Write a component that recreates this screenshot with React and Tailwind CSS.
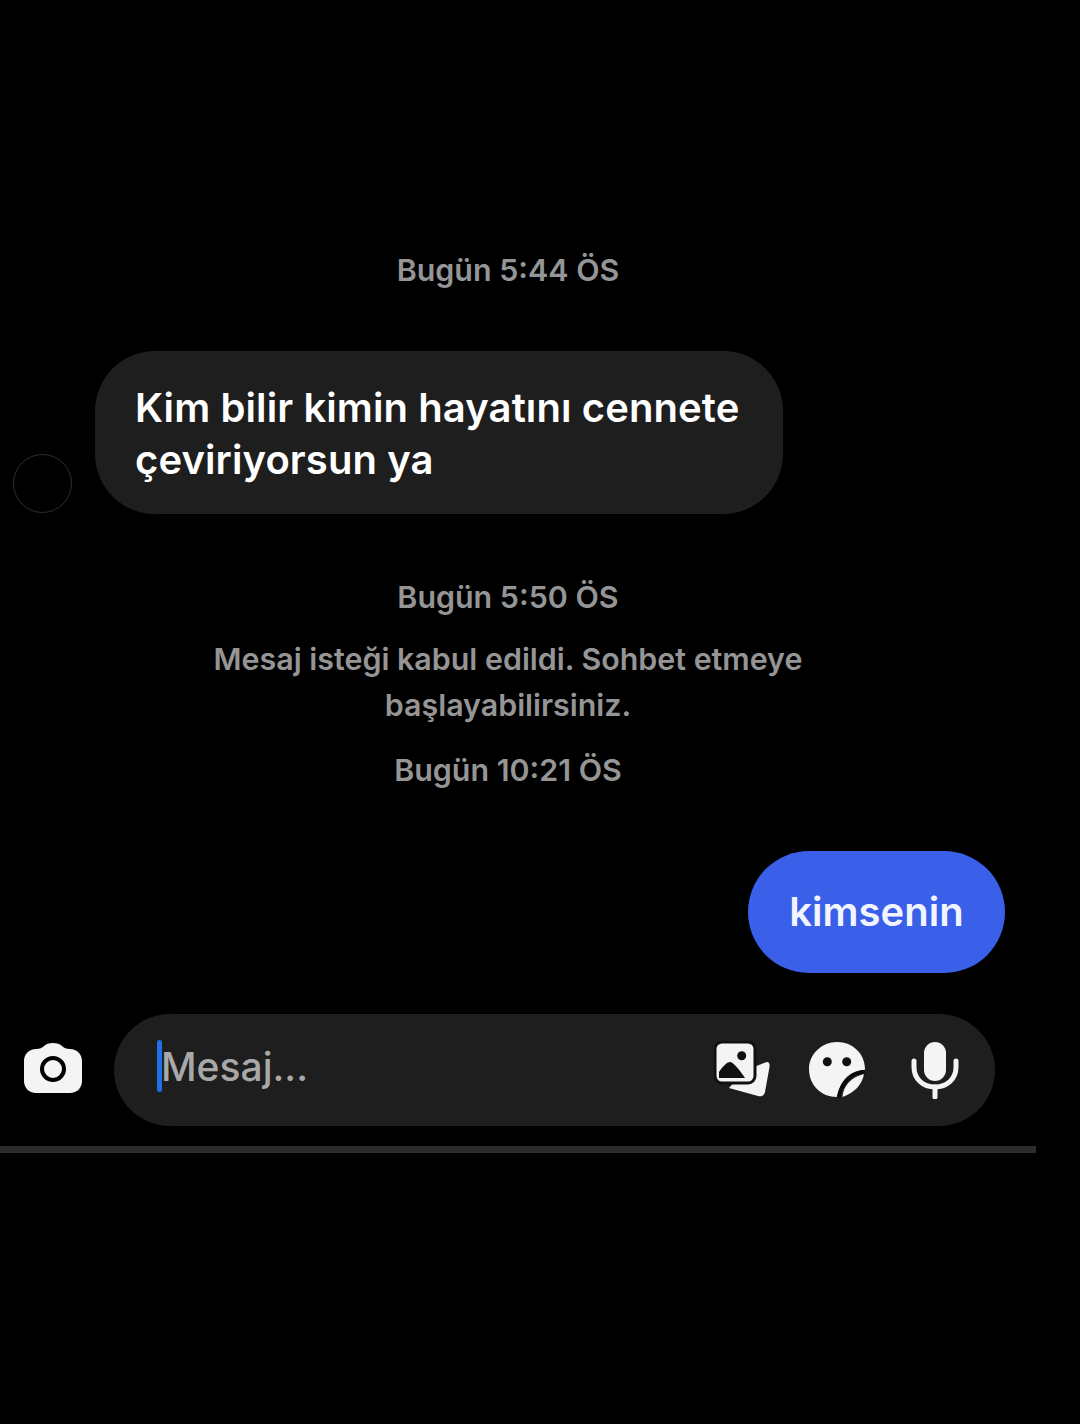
import React from "react";

const CameraIcon = () => (
  <svg width="60" height="54" viewBox="0 0 60 54">
    <path
      d="M13 6C17 6 19 5 21 3C23 1 26 0 30 0C34 0 37 1 39 3C41 5 43 6 47 6C54 6 59 11 59 18V38C59 45 54 50 47 50H13C6 50 1 45 1 38V18C1 11 6 6 13 6Z"
      fill="#f4f4f4"
    />
    <circle cx="30" cy="26" r="11" fill="#f4f4f4" stroke="#000" strokeWidth="4" />
  </svg>
);

const GalleryIcon = () => (
  <svg width="58" height="58" viewBox="0 0 58 58">
    <path
      d="M15 47L30 30L50 22L53 21C55 21 56 23 55.500 26L51 51C50 55 47 56 44 55Z"
      fill="#f4f4f4"
    />
    <rect x="1" y="1" width="40" height="41" rx="7" fill="#f4f4f4" stroke="#111" strokeWidth="3" />
    <circle cx="27.700" cy="14.700" r="4.500" fill="#111" />
    <path d="M5 37V31C8 26 13 21 16 21C19 21 25 28 31 37Z" fill="#111" />
  </svg>
);

const StickerIcon = () => (
  <svg width="58" height="58" viewBox="0 0 58 58">
    <path
      d="M28 1C44 1 56 13 56 28V29C40 30 31 40 28 56C12 56 0 44 0 28C0 13 13 1 28 1Z"
      fill="#f4f4f4"
    />
    <circle cx="18.300" cy="20.700" r="4.500" fill="#111" />
    <circle cx="37.700" cy="20.700" r="4.500" fill="#111" />
    <path d="M29.500 56.500C33 41 42 31.500 56 30.500" fill="none" stroke="#0a0a0a" strokeWidth="3.500" />
    <path d="M33.500 56C34 45 42 36 55 33C53 44 45 52 33.500 56Z" fill="#f4f4f4" />
  </svg>
);

const MicIcon = () => (
  <svg width="48" height="58" viewBox="0 0 48 58">
    <rect x="13" y="1" width="22" height="39" rx="11" fill="#f4f4f4" />
    <path
      d="M3 20v6c0 12 9 20 21 20s21-8 21-20v-6"
      fill="none"
      stroke="#f4f4f4"
      strokeWidth="5"
      strokeLinecap="round"
    />
    <path d="M24 46v10" stroke="#f4f4f4" strokeWidth="5" strokeLinecap="round" />
  </svg>
);

const Stamp = ({ children, className }) => (
  <div className={`text-center font-semibold text-[#959595] text-[30.4px] leading-[36px] ${className}`}>
    {children}
  </div>
);

const App = () => {
  return (
    <div
      className="w-[1080px] h-[1424px] bg-black overflow-hidden flex flex-col"
      style={{ fontFamily: "Inter, sans-serif" }}
    >
      <div className="pt-[252px] pr-[64px]">
        <Stamp>Bugün 5:44 ÖS</Stamp>
      </div>

      {/* incoming message */}
      <div className="flex items-end gap-[23px] pl-[13px] mt-[63px]">
        <div className="w-[59px] h-[59px] rounded-full border border-[#2e2e2e] mb-px" />
        <div className="w-[688px] h-[163px] rounded-[60px] bg-[#1e1e1e] pl-[40px] pt-[31px] text-white font-semibold text-[40px] leading-[52px] tracking-[0.1px]">
          Kim bilir kimin hayatını cennete
          <br />
          çeviriyorsun ya
        </div>
      </div>

      <div className="pr-[64px] mt-[65px]">
        <Stamp>Bugün 5:50 ÖS</Stamp>
        <div className="mt-[21px] text-center font-semibold text-[#959595] text-[30.4px] leading-[46px]">
          Mesaj isteği kabul edildi. Sohbet etmeye
          <br />
          başlayabilirsiniz.
        </div>
        <Stamp className="mt-[24px]">Bugün 10:21 ÖS</Stamp>
      </div>

      {/* outgoing message */}
      <div className="flex justify-end pr-[75px] mt-[63px]">
        <div className="w-[257px] h-[122px] rounded-[61px] bg-[#3a5fe9] flex items-center justify-center text-[#f2f5ff] font-semibold text-[40px]">
          kimsenin
        </div>
      </div>

      {/* composer */}
      <div className="flex items-center mt-[41px] pl-[23px]">
        <div className="w-[91px] shrink-0 flex">
          <CameraIcon />
        </div>
        <div className="w-[881px] h-[112px] rounded-[56px] bg-[#1e1e1e] flex items-center pl-[43px] pr-[36px]">
          <div className="w-[5px] h-[52px] -mt-[8px] rounded-full bg-[#1f6fe5] shrink-0" />
          <div className="text-[#a8a8a8] font-medium text-[39px] flex-1 -mt-[6px] -ml-[1px]">Mesaj...</div>
          <div className="flex items-center">
            <GalleryIcon />
            <div className="ml-[37px] mr-[44px] flex">
              <StickerIcon />
            </div>
            <MicIcon />
          </div>
        </div>
      </div>

      <div className="w-[1036px] h-[7px] mt-[20px] bg-[#2c2c2c]" />
    </div>
  );
};

export default App;
